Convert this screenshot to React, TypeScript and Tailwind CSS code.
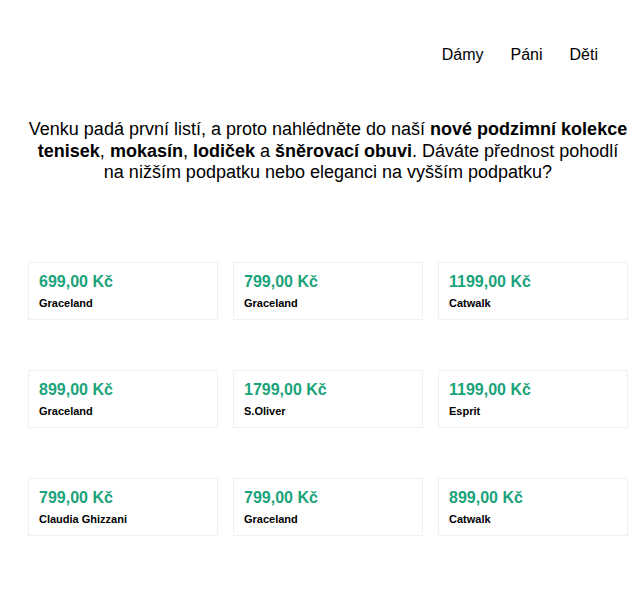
import React from 'react';

const products = [
  { price: '699,00 Kč', brand: 'Graceland' },
  { price: '799,00 Kč', brand: 'Graceland' },
  { price: '1199,00 Kč', brand: 'Catwalk' },
  { price: '899,00 Kč', brand: 'Graceland' },
  { price: '1799,00 Kč', brand: 'S.Oliver' },
  { price: '1199,00 Kč', brand: 'Esprit' },
  { price: '799,00 Kč', brand: 'Claudia Ghizzani' },
  { price: '799,00 Kč', brand: 'Graceland' },
  { price: '899,00 Kč', brand: 'Catwalk' },
];

export default function App() {
  return (
    <div className="min-h-[600px] bg-white text-black font-['Liberation_Sans',Arial,sans-serif]">
      {/* Nav */}
      <nav className="flex justify-end gap-[27px] pt-[45px] pr-[42px] text-[16px] leading-[20px]">
        <a>Dámy</a>
        <a>Páni</a>
        <a>Děti</a>
      </nav>

      {/* Intro */}
      <p className="ml-[28px] w-[600px] mt-[54px] text-center text-[18px] leading-[21.5px]">
        Venku padá první listí, a proto nahlédněte do naší <b>nové podzimní kolekce tenisek</b>,{' '}
        <b>mokasín</b>, <b>lodiček</b> a <b>šněrovací obuvi</b>. Dáváte přednost pohodlí na nižším
        podpatku nebo eleganci na vyšším podpatku?
      </p>

      {/* Products */}
      <div className="ml-[28px] mt-[78px] grid grid-cols-[190px_190px_190px] gap-x-[15px] gap-y-[50px]">
        {products.map((p, i) => (
          <div key={i} className="h-[58px] border border-[#f0f0f0] px-[10px] pt-[9px]">
            <div className="text-[16px] leading-[20px] font-bold text-[#1aa37a]">{p.price}</div>
            <div className="mt-[4px] text-[11px] leading-[14px] font-bold">{p.brand}</div>
          </div>
        ))}
      </div>
    </div>
  );
}
